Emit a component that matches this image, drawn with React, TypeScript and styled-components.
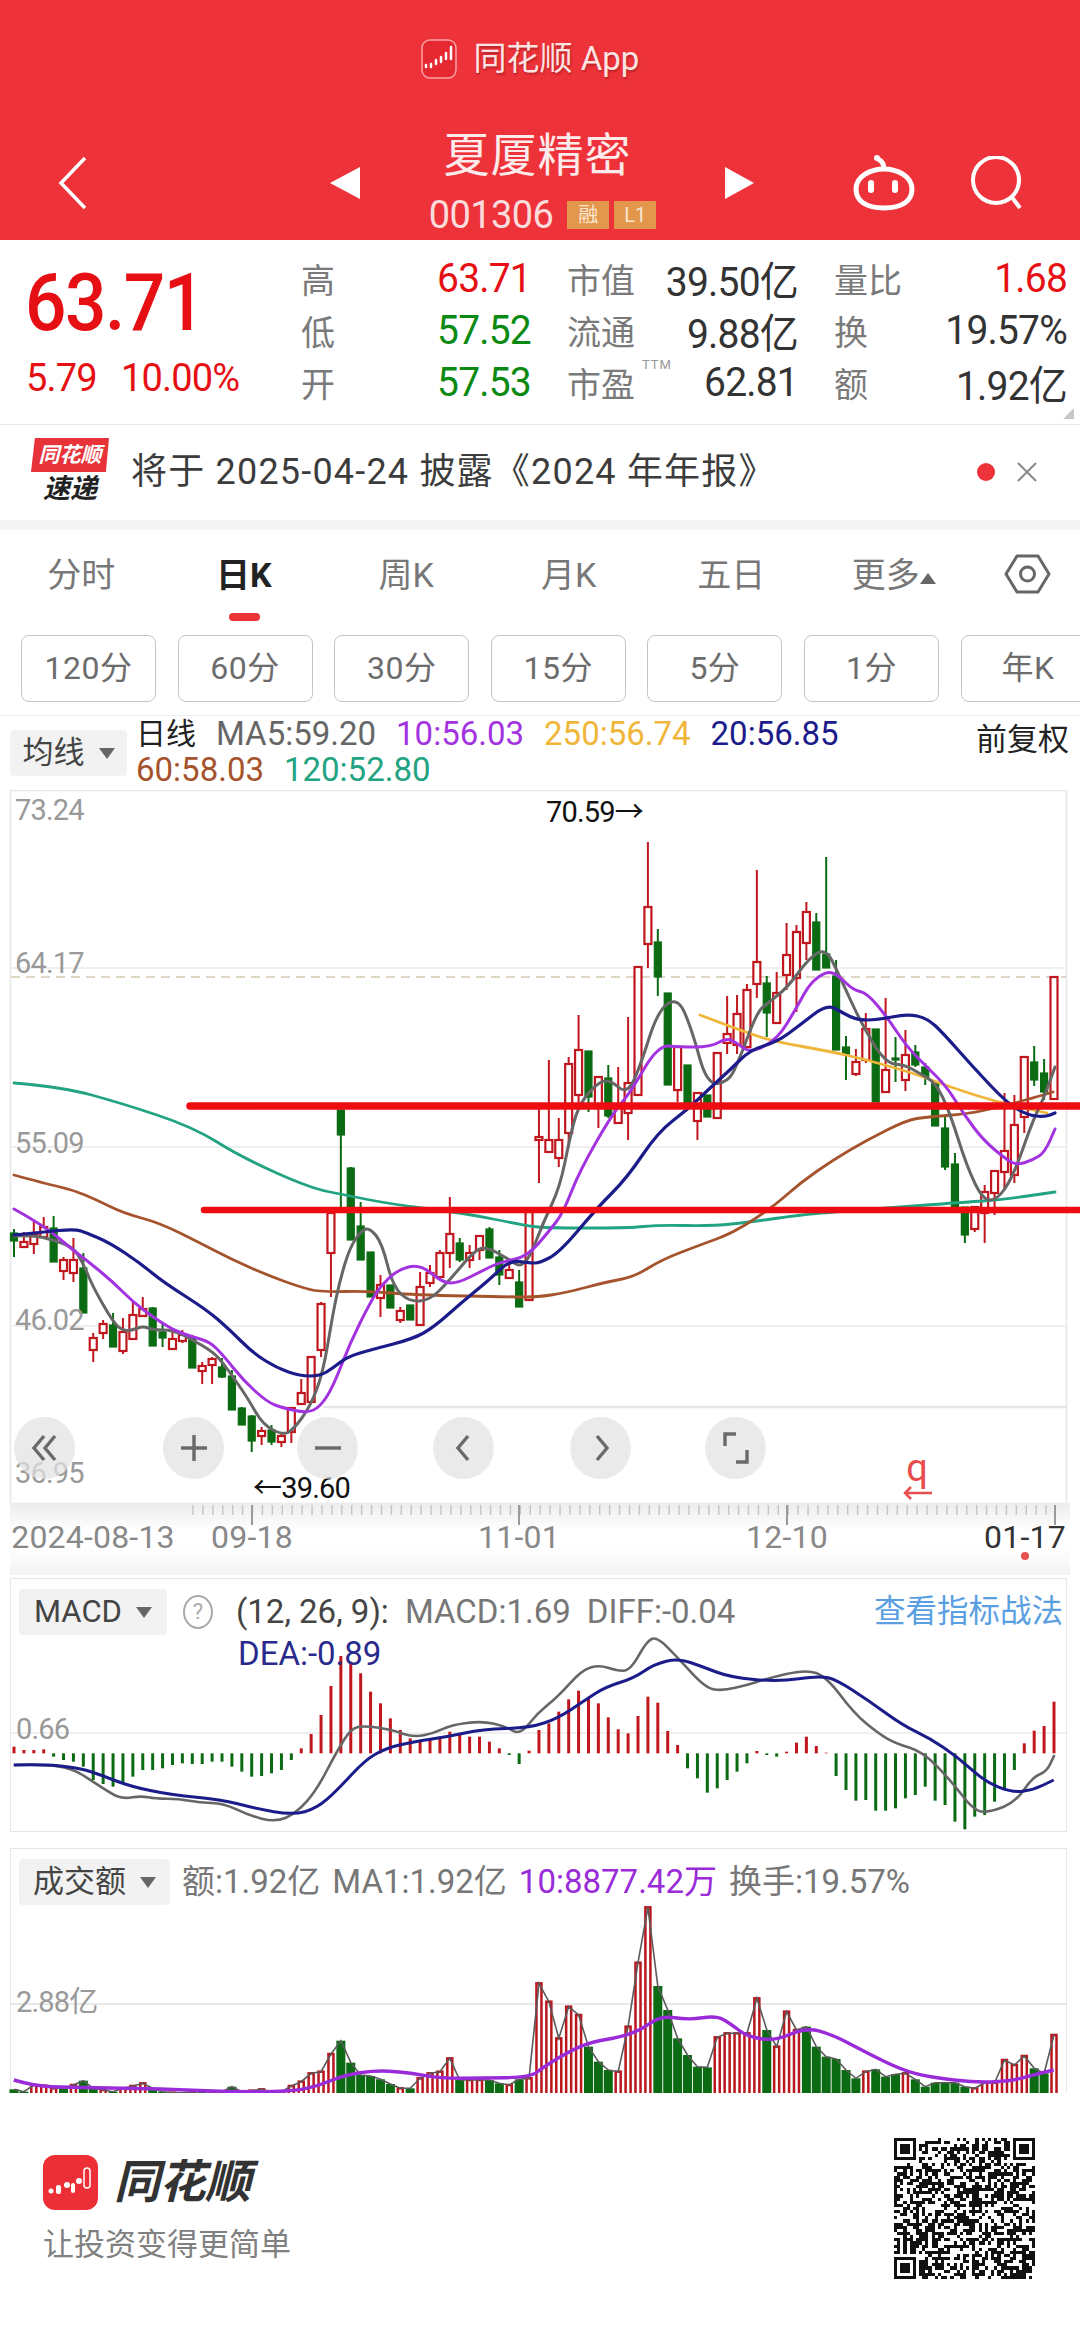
import styled, { createGlobalStyle } from "styled-components";

const SANS = `Roboto, "Noto Sans CJK SC", sans-serif`;

const GlobalStyle = createGlobalStyle`
  html, body {
    margin: 0;
    padding: 0;
    background: #fff;
    font-family: ${SANS};
  }
  * { box-sizing: border-box; }
`;

const RED = "#e60f14";
const GREEN = "#0a8a12";
const UP = "#c0161d";
const DOWN = "#0b6b12";

// [high, low, bodyTop, bodyBottom, up], read off the screenshot in page pixels
const CANDLES: number[][] = [
  [1229, 1257, 1233, 1241, 0], [1232, 1247, 1242, 1247, 1], [1221, 1254, 1235, 1244, 1], [1217, 1237, 1227, 1237, 1],
  [1216, 1262, 1228, 1262, 0], [1257, 1280, 1260, 1271, 1], [1238, 1282, 1260, 1273, 1], [1253, 1313, 1268, 1313, 0],
  [1333, 1362, 1338, 1350, 1], [1320, 1339, 1324, 1333, 1], [1313, 1347, 1325, 1347, 0], [1318, 1354, 1332, 1351, 1],
  [1302, 1340, 1315, 1339, 1], [1297, 1317, 1309, 1316, 1], [1307, 1346, 1308, 1346, 0], [1323, 1347, 1332, 1338, 0],
  [1332, 1350, 1339, 1349, 1], [1330, 1343, 1335, 1341, 1], [1335, 1368, 1337, 1368, 0], [1362, 1384, 1366, 1371, 1],
  [1357, 1384, 1359, 1365, 1], [1358, 1378, 1367, 1377, 0], [1370, 1410, 1376, 1410, 0], [1407, 1425, 1408, 1425, 0],
  [1415, 1452, 1416, 1441, 0], [1427, 1445, 1431, 1436, 1], [1425, 1445, 1430, 1442, 0], [1432, 1447, 1436, 1442, 1],
  [1407, 1443, 1408, 1432, 1], [1379, 1404, 1393, 1404, 1], [1356, 1402, 1357, 1402, 1], [1302, 1357, 1304, 1350, 1],
  [1213, 1297, 1213, 1253, 1], [1110, 1210, 1110, 1135, 0], [1167, 1240, 1168, 1240, 0], [1202, 1260, 1226, 1260, 0],
  [1252, 1297, 1252, 1297, 0], [1275, 1317, 1285, 1298, 1], [1285, 1308, 1285, 1308, 0], [1307, 1323, 1311, 1320, 1],
  [1305, 1320, 1305, 1320, 0], [1272, 1325, 1287, 1325, 1], [1265, 1287, 1273, 1283, 1], [1250, 1278, 1253, 1277, 1],
  [1197, 1268, 1234, 1253, 1], [1238, 1262, 1243, 1260, 0], [1245, 1268, 1253, 1260, 1], [1236, 1260, 1236, 1250, 1],
  [1227, 1258, 1229, 1258, 0], [1250, 1285, 1257, 1275, 0], [1260, 1279, 1270, 1278, 1], [1270, 1307, 1282, 1307, 0],
  [1208, 1300, 1212, 1300, 1], [1108, 1183, 1137, 1140, 1], [1060, 1152, 1140, 1152, 1], [1118, 1167, 1140, 1158, 1],
  [1057, 1147, 1064, 1133, 1], [1015, 1107, 1050, 1095, 1], [1051, 1112, 1051, 1097, 0], [1077, 1128, 1077, 1108, 1],
  [1065, 1118, 1078, 1116, 0], [1067, 1123, 1108, 1123, 1], [1017, 1140, 1083, 1113, 1], [967, 1095, 967, 1095, 1],
  [842, 968, 907, 944, 1], [929, 996, 942, 977, 0], [993, 1085, 993, 1085, 0], [1047, 1102, 1047, 1090, 1],
  [1065, 1107, 1065, 1107, 0], [1093, 1140, 1093, 1121, 1], [1095, 1117, 1095, 1117, 0], [1053, 1118, 1053, 1118, 1],
  [996, 1054, 1034, 1043, 1], [995, 1054, 1014, 1045, 1], [984, 1047, 990, 1047, 1], [870, 998, 962, 984, 1],
  [976, 1037, 983, 1013, 0], [972, 1023, 993, 1023, 1], [923, 990, 955, 975, 1], [925, 1012, 932, 978, 1],
  [902, 960, 912, 943, 1], [913, 970, 922, 970, 0], [857, 968, 954, 968, 0], [960, 1050, 976, 1050, 0],
  [1036, 1080, 1047, 1054, 0], [1049, 1076, 1062, 1074, 1], [1013, 1063, 1029, 1060, 1], [1029, 1102, 1029, 1102, 0],
  [998, 1092, 1070, 1092, 1], [1037, 1082, 1058, 1060, 0], [1030, 1091, 1055, 1080, 1], [1045, 1067, 1052, 1065, 0],
  [1063, 1085, 1067, 1077, 0], [1083, 1126, 1083, 1126, 0], [1117, 1170, 1128, 1167, 0], [1153, 1207, 1164, 1207, 0],
  [1207, 1243, 1207, 1235, 0], [1207, 1232, 1207, 1229, 1], [1185, 1243, 1192, 1213, 1], [1170, 1215, 1171, 1193, 1],
  [1093, 1190, 1151, 1172, 1], [1095, 1183, 1125, 1175, 1], [1057, 1133, 1057, 1117, 1], [1046, 1086, 1062, 1080, 0],
  [1059, 1100, 1073, 1092, 0], [977, 1099, 977, 1099, 1],
];

const MA5 = [14,1236, 33,1235, 53,1240, 73,1247, 83,1263, 93,1287, 113,1322, 123,1331, 133,1330, 143,1326, 153,1330, 173,1330, 193,1340, 213,1352, 223,1363, 233,1377, 247,1397, 263,1425, 283,1435, 293,1430, 310,1407, 323,1373, 333,1313, 340,1280, 350,1247, 362,1230, 370,1228, 382,1243, 393,1287, 410,1302, 430,1300, 448,1282, 475,1250, 487,1247, 510,1260, 520,1267, 530,1257, 543,1223, 560,1187, 570,1137, 578,1107, 593,1087, 608,1078, 627,1095, 640,1067, 658,1010, 678,997, 692,1030, 707,1085, 728,1082, 738,1063, 757,1012, 768,1003, 788,987, 809,958, 826,948, 840,977, 861,1023, 885,1063, 905,1065, 919,1073, 936,1083, 950,1113, 967,1167, 983,1200, 997,1200, 1013,1177, 1033,1120, 1043,1100, 1055,1067];
const MA10 = [14,1209, 43,1225, 73,1250, 90,1263, 113,1282, 133,1302, 153,1317, 173,1330, 193,1337, 210,1342, 223,1355, 243,1380, 267,1402, 283,1408, 307,1413, 320,1407, 333,1387, 350,1343, 370,1303, 380,1287, 397,1270, 420,1264, 443,1283, 458,1283, 480,1272, 500,1262, 527,1257, 550,1230, 563,1213, 580,1170, 613,1113, 630,1093, 658,1045, 680,1047, 710,1047, 727,1038, 737,1043, 750,1053, 777,1040, 797,1007, 810,983, 827,971, 838,975, 853,990, 867,993, 887,1017, 907,1047, 927,1067, 947,1087, 963,1113, 983,1140, 1007,1160, 1017,1165, 1033,1160, 1045,1152, 1055,1129];
const MA20 = [14,1235, 43,1232, 75,1229, 87,1233, 110,1243, 140,1263, 163,1282, 207,1310, 230,1330, 253,1353, 277,1368, 300,1376, 320,1376, 333,1368, 347,1357, 370,1350, 413,1339, 434,1327, 461,1303, 489,1280, 510,1260, 530,1263, 540,1263, 560,1252, 597,1208, 627,1178, 658,1132, 687,1110, 710,1088, 730,1070, 750,1050, 777,1042, 800,1025, 827,1004, 843,1013, 857,1020, 877,1020, 907,1014, 927,1018, 943,1033, 973,1067, 1007,1103, 1027,1115, 1045,1117, 1055,1113];
const MA60 = [14,1175, 43,1183, 73,1190, 97,1200, 123,1213, 160,1223, 200,1243, 233,1260, 267,1275, 300,1287, 320,1292, 370,1291, 413,1295, 517,1297, 537,1297, 565,1293, 606,1282, 634,1277, 661,1260, 700,1245, 733,1233, 773,1207, 800,1183, 833,1160, 867,1140, 907,1120, 927,1117, 967,1114, 1000,1107, 1033,1098, 1053,1092];
const MA120 = [14,1083, 62,1087, 121,1103, 193,1127, 241,1157, 310,1188, 345,1195, 390,1204, 463,1213, 523,1225, 543,1228, 630,1228, 657,1225, 713,1226, 750,1222, 800,1215, 833,1212, 900,1207, 967,1202, 1000,1200, 1055,1192];
const MA250 = [700,1015, 747,1033, 777,1042, 833,1052, 867,1060, 913,1073, 950,1087, 1000,1103, 1047,1113];

// bar ends as read from the panel crops (x = z / 1.452, y = z / 3 + panel origin)
const MACD_BARS = [560,570,570,568,590,600,605,620,660,672,680,672,650,630,630,625,615,610,612,612,605,605,620,635,650,648,640,630,600,565,522,465,378,288,305,340,395,430,475,510,535,545,535,530,515,525,530,530,545,565,585,612,572,510,490,455,418,392,412,430,472,508,520,468,410,428,513,555,625,655,698,685,660,635,610,573,585,590,575,548,530,558,578,648,690,722,720,752,752,745,715,705,680,722,735,785,808,770,765,725,690,630,550,512,498,425];
const DIFF = [20,615, 60,612, 105,625, 135,665, 165,705, 180,716, 205,708, 225,716, 260,717, 290,728, 325,730, 360,765, 400,787, 430,760, 460,690, 490,570, 510,505, 530,497, 570,510, 600,532, 630,520, 655,495, 700,483, 735,500, 755,525, 780,460, 810,410, 845,330, 870,315, 895,332, 915,332, 940,240, 955,232, 985,295, 1025,385, 1050,392, 1085,375, 1110,358, 1170,328, 1200,350, 1240,460, 1275,520, 1300,550, 1340,575, 1380,660, 1415,755, 1440,755, 1475,725, 1500,650, 1520,635, 1531,585];
const DEA = [20,615, 60,612, 110,622, 140,640, 190,680, 250,705, 320,718, 370,745, 425,765, 460,745, 490,690, 530,600, 560,565, 600,545, 650,530, 700,508, 770,503, 810,475, 850,420, 880,380, 920,355, 950,312, 985,295, 1020,320, 1060,352, 1130,365, 1190,347, 1215,360, 1260,420, 1310,495, 1350,535, 1390,590, 1430,665, 1470,698, 1500,690, 1530,660];

// [top, up]
const VOLUME: number[][] = [[748,0],[755,0],[735,1],[737,1],[745,1],[745,0],[735,1],[722,0],[745,0],[750,1],[755,0],[745,1],[738,1],[730,1],[745,0],[755,0],[758,1],[758,0],[756,1],[755,0],[755,1],[755,1],[740,0],[755,0],[752,1],[748,1],[755,0],[755,1],[738,1],[725,1],[700,1],[695,1],[642,1],[602,0],[668,0],[705,0],[708,0],[718,0],[732,0],[745,1],[745,0],[715,1],[700,1],[695,1],[655,1],[720,0],[720,1],[720,1],[720,0],[730,0],[735,1],[718,0],[715,1],[430,1],[485,1],[595,1],[500,1],[525,1],[620,0],[665,0],[690,0],[695,1],[560,1],[368,1],[202,1],[438,0],[510,0],[595,0],[645,0],[680,0],[682,0],[592,1],[580,1],[580,1],[580,1],[475,1],[570,0],[620,1],[515,1],[570,1],[560,0],[620,0],[650,0],[657,0],[690,0],[715,0],[695,1],[688,0],[710,0],[703,0],[700,1],[718,0],[740,0],[728,0],[728,0],[728,0],[740,0],[745,1],[728,1],[728,1],[660,1],[675,1],[648,1],[685,0],[700,0],[585,1]];
const VOL_MA = [20,720, 50,738, 100,742, 180,745, 250,748, 330,755, 420,755, 460,740, 500,705, 550,690, 600,700, 640,715, 700,714, 770,712, 790,680, 830,630, 860,605, 900,592, 930,570, 960,527, 1000,540, 1040,527, 1060,550, 1085,590, 1125,603, 1170,562, 1210,585, 1260,640, 1310,690, 1350,712, 1420,728, 1470,722, 1500,705, 1530,690];

const barX = (i: number, n: number) => 14 + (1040 * i) / (n - 1);

// smooth curve through the points, quadratic via midpoints
function curve(flat: number[], fx = (v: number) => v, fy = (v: number) => v) {
  let d = `M${fx(flat[0]).toFixed(1)} ${fy(flat[1]).toFixed(1)}`;
  for (let i = 2; i < flat.length - 2; i += 2) {
    const x = fx(flat[i]);
    const y = fy(flat[i + 1]);
    const mx = (x + fx(flat[i + 2])) / 2;
    const my = (y + fy(flat[i + 3])) / 2;
    d += `Q${x.toFixed(1)} ${y.toFixed(1)} ${mx.toFixed(1)} ${my.toFixed(1)}`;
  }
  const n = flat.length;
  return d + `L${fx(flat[n - 2]).toFixed(1)} ${fy(flat[n - 1]).toFixed(1)}`;
}

function qrPath() {
  const size = 45;
  let seed = 20250117;
  const rnd = () => {
    seed = (seed * 1664525 + 1013904223) >>> 0;
    return seed / 4294967296;
  };
  const finder = (x: number, y: number, ox: number, oy: number) => {
    const dx = x - ox;
    const dy = y - oy;
    if (dx < -1 || dy < -1 || dx > 7 || dy > 7) return null;
    if (dx < 0 || dy < 0 || dx > 6 || dy > 6) return false;
    if (dx === 0 || dy === 0 || dx === 6 || dy === 6) return true;
    if (dx === 1 || dy === 1 || dx === 5 || dy === 5) return false;
    return true;
  };
  let d = "";
  for (let y = 0; y < size; y++) {
    for (let x = 0; x < size; x++) {
      const f = finder(x, y, 0, 0) ?? finder(x, y, size - 7, 0) ?? finder(x, y, 0, size - 7);
      const on = f === null ? rnd() > 0.48 : f;
      if (on) d += `M${x} ${y}h1v1h-1z`;
    }
  }
  return d;
}
const QR_D = qrPath();

const Page = styled.div`
  width: 1080px;
  height: 2339px;
  overflow: hidden;
  background: #fff;
  color: #333;
`;

const Header = styled.header`
  height: 240px;
  background: #ee323a;
  color: #fff;
  padding-top: 39px;
`;

const AppBar = styled.div`
  display: flex;
  justify-content: center;
  align-items: center;
  gap: 17px;
  height: 40px;
  font-size: 33px;
  line-height: 40px;
  color: #fbe3e3;
  text-shadow: 1px 2px 2px rgba(120, 20, 20, 0.45);
  padding-right: 20px;
`;

const StockRow = styled.div`
  display: flex;
  align-items: center;
  height: 112px;
  margin-top: 37px;
  padding-left: 58px;
`;

const Back = styled.svg`
  width: 30px;
  height: 54px;
  margin-top: 22px;
`;

const StepArrow = styled.span<{ $dir: "left" | "right" }>`
  width: 0;
  height: 0;
  margin-top: 22px;
  margin-left: ${(p) => (p.$dir === "left" ? "242px" : "0")};
  border-top: 16px solid transparent;
  border-bottom: 16px solid transparent;
  ${(p) => (p.$dir === "left" ? "border-right: 30px solid #fff;" : "border-left: 29px solid #fff;")}
`;

const TitleBlock = styled.div`
  width: 365px;
  display: flex;
  flex-direction: column;
  align-items: center;
  margin-top: 13px;
  padding-right: 10px;
`;

const StockName = styled.div`
  font-size: 46px;
  line-height: 54px;
  letter-spacing: 1px;
  color: #fdeaea;
`;

const CodeRow = styled.div`
  display: flex;
  align-items: center;
  gap: 5px;
  margin-top: 18px;
  padding-left: 10px;
`;

const StockCode = styled.span`
  font-size: 38px;
  line-height: 30px;
  letter-spacing: -0.6px;
  color: #fbdcdc;
  margin-right: 9px;
`;

const Badge = styled.span`
  width: 42px;
  height: 28px;
  background: #e2974c;
  color: #fbe6d2;
  font-size: 20px;
  line-height: 28px;
  text-align: center;
`;

const Robot = styled.svg`
  width: 62px;
  height: 56px;
  margin-left: 99px;
  margin-top: 22px;
`;

const Lens = styled.svg`
  width: 52px;
  height: 54px;
  margin-left: 55px;
  margin-top: 22px;
`;

const Quote = styled.section`
  position: relative;
  height: 185px;
  display: flex;
  border-bottom: 1px solid #e8e8e8;
  padding: 12px 16px 0 25px;
  &::after {
    content: "";
    position: absolute;
    right: 6px;
    bottom: 5px;
    border-left: 11px solid transparent;
    border-bottom: 11px solid #c8c8c8;
  }
`;

const PriceBlock = styled.div`
  width: 276px;
  color: ${RED};
`;

const Price = styled.div`
  font-size: 73px;
  line-height: 62px;
  letter-spacing: -1.5px;
  font-weight: 500;
  margin-top: 19px;
  transform: scaleY(1.1);
`;

const Change = styled.div`
  display: flex;
  gap: 24px;
  margin-top: 26px;
  font-size: 38px;
  line-height: 38px;
  letter-spacing: -0.8px;
  margin-left: 1px;
`;

const Stats = styled.div`
  display: grid;
  grid-template-columns: 226px 227px 229px;
  grid-auto-rows: 52px;
  column-gap: 40px;
`;

const Stat = styled.div`
  position: relative;
  display: flex;
  justify-content: space-between;
  align-items: center;
`;

const StatLabel = styled.span`
  font-size: 34px;
  color: #7a7a7a;
`;

const StatValue = styled.span<{ $color?: string }>`
  display: inline-block;
  margin-right: -4px;
  font-size: 39px;
  letter-spacing: -0.8px;
  transform: scaleY(1.06);
  color: ${(p) => p.$color ?? "#333"};
`;

const Ttm = styled.sup`
  position: absolute;
  left: 75px;
  top: 2px;
  font-size: 13px;
  line-height: 14px;
  letter-spacing: 1px;
  color: #999;
`;

const Notice = styled.section`
  height: 105px;
  display: flex;
  align-items: flex-start;
  border-bottom: 10px solid #f5f5f5;
  padding: 13px 42px 0 31px;
`;

const NoticeLogo = styled.div`
  width: 78px;
  display: flex;
  flex-direction: column;
  align-items: center;
  font-style: italic;
  font-weight: 700;
`;

const LogoFlag = styled.div`
  position: relative;
  width: 78px;
  height: 34px;
  background: #e8323a;
  color: #fff;
  font-size: 21px;
  line-height: 34px;
  text-align: center;
  white-space: nowrap;
  clip-path: polygon(5% 0, 100% 0, 96% 100%, 54% 100%, 50% 110%, 46% 100%, 0 100%);
`;

const LogoSub = styled.div`
  font-size: 27px;
  line-height: 30px;
  color: #222;
  margin-top: 2px;
`;

const NoticeText = styled.div`
  flex: 1;
  margin-left: 22px;
  margin-top: 11px;
  font-size: 36px;
  line-height: 46px;
  letter-spacing: 1.2px;
  color: #3c3c3c;
  white-space: nowrap;
`;

const NoticeDot = styled.span`
  width: 18px;
  height: 18px;
  margin-top: 25px;
  border-radius: 50%;
  background: #ee323a;
`;

const NoticeClose = styled.svg`
  width: 22px;
  height: 22px;
  margin-top: 23px;
  margin-left: 21px;
`;

const Tabs = styled.nav`
  display: grid;
  grid-template-columns: repeat(6, 162.5px) 1fr;
  height: 97px;
`;

const Tab = styled.div<{ $active?: boolean }>`
  position: relative;
  display: flex;
  justify-content: center;
  align-items: flex-start;
  font-size: 34px;
  line-height: 90px;
  color: ${(p) => (p.$active ? "#222" : "#777")};
  font-weight: ${(p) => (p.$active ? 700 : 400)};
  ${(p) =>
    p.$active &&
    `&::after {
      content: "";
      position: absolute;
      left: 50%;
      bottom: 6px;
      width: 31px;
      height: 8px;
      margin-left: -15px;
      border-radius: 4px;
      background: #ee323a;
    }`}
`;

const Caret = styled.span<{ $up?: boolean; $color?: string; $size?: number }>`
  width: 0;
  height: 0;
  align-self: center;
  border-left: ${(p) => p.$size ?? 8}px solid transparent;
  border-right: ${(p) => p.$size ?? 8}px solid transparent;
  ${(p) =>
    p.$up
      ? `border-bottom: 11px solid ${p.$color ?? "#666"};`
      : `border-top: 11px solid ${p.$color ?? "#666"};`}
`;

const SettingsIcon = styled.svg`
  width: 47px;
  height: 42px;
  margin-top: 23px;
`;

const Periods = styled.div`
  display: flex;
  gap: 21.6px;
  margin-top: 8px;
  padding-left: 21px;
  padding-bottom: 13px;
  overflow: hidden;
  border-bottom: 1px solid #eee;
`;

const PeriodChip = styled.div`
  flex: none;
  width: 135px;
  height: 67px;
  border: 1.5px solid #c4c4c4;
  border-radius: 8px;
  font-size: 32px;
  line-height: 64px;
  text-align: center;
  letter-spacing: 0.5px;
  color: #6c6c6c;
`;

const LegendBar = styled.div`
  display: flex;
  height: 74px;
  padding-left: 10px;
`;

const Chip = styled.div<{ $width: number }>`
  flex: none;
  width: ${(p) => p.$width}px;
  height: 46px;
  display: flex;
  align-items: center;
  justify-content: center;
  gap: 14px;
  background: #f2f2f2;
  border-radius: 4px;
  font-size: 31px;
  line-height: 46px;
  color: #444;
`;

const ChartChip = styled(Chip)`
  margin-top: 14px;
`;

const LegendLines = styled.div`
  width: 849px;
  padding-left: 9px;
  font-size: 33px;
  line-height: 36px;
`;

const LegendLine = styled.div`
  display: flex;
  gap: 20px;
`;

const LegendItem = styled.span<{ $color: string; $small?: boolean }>`
  color: ${(p) => p.$color};
  font-size: ${(p) => (p.$small ? "30px" : "inherit")};
  white-space: nowrap;
`;

const Adjust = styled.div`
  font-size: 31px;
  line-height: 48px;
  color: #222;
  white-space: nowrap;
`;

const ChartBody = styled.div`
  position: relative;
  height: 713px;
`;

const ChartSvg = styled.svg`
  position: absolute;
  left: 0;
  top: 0;
  display: block;
`;

const AxisLabel = styled.span<{ $y: number }>`
  position: absolute;
  left: 15px;
  top: ${(p) => p.$y}px;
  font-size: 29px;
  line-height: 34px;
  letter-spacing: -0.8px;
  color: #999;
`;

const PriceMark = styled.span<{ $left: number; $y: number }>`
  position: absolute;
  left: ${(p) => p.$left}px;
  top: ${(p) => p.$y}px;
  font-size: 29px;
  line-height: 34px;
  letter-spacing: -0.8px;
  color: #111;
  white-space: nowrap;
`;

const NavButton = styled.div<{ $left: number }>`
  position: absolute;
  left: ${(p) => p.$left}px;
  top: 627px;
  width: 61px;
  height: 62px;
  display: flex;
  align-items: center;
  justify-content: center;
  border-radius: 50%;
  background: rgba(226, 226, 226, 0.72);
`;

const NavIcon = styled.svg`
  width: 36px;
  height: 36px;
`;

const FlagMark = styled.div`
  position: absolute;
  left: 899px;
  top: 662px;
  width: 36px;
  display: flex;
  flex-direction: column;
  align-items: center;
  font-size: 38px;
  line-height: 32px;
  color: #e84c4c;
`;

const FlagArrow = styled.svg`
  width: 30px;
  height: 14px;
  margin-top: 2px;
`;

const DateBand = styled.div`
  position: relative;
  height: 72px;
  margin: 0 10px;
  background: linear-gradient(#ececec, #fff 38%, #fff 62%, #f3f3f3);
`;

const Ticks = styled.svg`
  position: absolute;
  left: -10px;
  top: 0;
`;

const DateLabel = styled.span<{ $x: number; $dark?: boolean }>`
  position: absolute;
  left: ${(p) => p.$x - 10}px;
  top: 16px;
  transform: translateX(-50%);
  font-size: 32px;
  line-height: 36px;
  letter-spacing: 0.2px;
  color: ${(p) => (p.$dark ? "#333" : "#888")};
  white-space: nowrap;
`;

const LatestDot = styled.span`
  position: absolute;
  left: 1011px;
  top: 49px;
  width: 8px;
  height: 8px;
  border-radius: 50%;
  background: #e8504f;
`;

const Panel = styled.section<{ $height: number; $mt: number; $open?: boolean }>`
  position: relative;
  height: ${(p) => p.$height}px;
  margin: ${(p) => p.$mt}px 13px 0 10px;
  border: 1px solid #e6e6e6;
  ${(p) => (p.$open ? "border-bottom: none;" : "")}
  padding: 10px 0 0 8px;
`;

const PanelSvg = styled.svg`
  position: absolute;
  left: -11px;
  top: -1px;
  display: block;
`;

const PanelHead = styled.div<{ $gap: number }>`
  position: relative;
  display: flex;
  align-items: center;
  gap: ${(p) => p.$gap}px;
  font-size: 33px;
  line-height: 46px;
  white-space: nowrap;
`;

const HelpMark = styled.span`
  flex: none;
  width: 30px;
  height: 34px;
  margin-right: 7px;
  border: 2px solid #aaa;
  border-radius: 50%;
  font-size: 22px;
  line-height: 30px;
  text-align: center;
  color: #aaa;
`;

const HeadText = styled.span<{ $color?: string }>`
  color: ${(p) => p.$color ?? "#777"};
`;

const TacticLink = styled.span`
  position: absolute;
  right: 3px;
  top: 0;
  font-size: 31.5px;
  color: #5b9fe3;
`;

const DeaLine = styled.div`
  position: relative;
  margin: -1px 0 0 219px;
  font-size: 33px;
  line-height: 40px;
  color: #2a2a8c;
`;

const PanelAxis = styled.span<{ $y: number }>`
  position: absolute;
  left: 5px;
  top: ${(p) => p.$y}px;
  font-size: 29px;
  line-height: 34px;
  letter-spacing: -0.8px;
  color: #999;
`;

const Footer = styled.footer`
  position: relative;
  height: 246px;
  background: #fff;
  display: flex;
  justify-content: space-between;
  padding: 45px 45px 0 43px;
`;

const Brand = styled.div`
  margin-top: 16px;
`;

const BrandRow = styled.div`
  display: flex;
  align-items: center;
  gap: 16px;
`;

const BrandName = styled.span`
  font-size: 46px;
  line-height: 56px;
  font-weight: 700;
  font-style: italic;
  letter-spacing: -0.5px;
  color: #333;
`;

const Slogan = styled.div`
  margin-top: 15px;
  font-size: 31px;
  line-height: 40px;
  color: #808080;
`;

const QrCode = styled.svg`
  width: 141px;
  height: 141px;
  shape-rendering: crispEdges;
`;

const periods = ["120分", "60分", "30分", "15分", "5分", "1分", "年K"];
const tabs = ["分时", "日K", "周K", "月K", "五日"];

const navIcons = [
  { left: 14, d: "M17 6L7 18l10 12M28 6L18 18l10 12" },
  { left: 163, d: "M5 18h26M18 5v26" },
  { left: 297, d: "M5 18h26" },
  { left: 433, d: "M22 6L12 18l10 12" },
  { left: 570, d: "M14 6l10 12-10 12" },
  { left: 705, d: "M18 4H7v12M18 32h11V20" },
];

function CandleChart() {
  const n = CANDLES.length;
  return (
    <ChartSvg width="1080" height="713" viewBox="0 790 1080 713">
      <rect x="10.5" y="790.5" width="1056" height="713" fill="none" stroke="#e6e6e6" strokeWidth="1.5" />
      <path d="M11 968H1066M11 1147H1066M11 1326H1066" stroke="#efefef" strokeWidth="2" />
      <path d="M323 1407H1066" stroke="#e6e6e6" strokeWidth="2.5" />
      <path d="M11 977H1066" stroke="#e0d6c6" strokeWidth="2" strokeDasharray="9 6" />
      {CANDLES.map(([hi, lo, top, bot, up], i) => {
        const x = barX(i, n);
        const color = up ? UP : DOWN;
        return (
          <g key={i}>
            <path d={`M${x} ${hi}V${lo}`} stroke={color} strokeWidth="2" />
            <rect
              x={x - 3.5}
              y={top}
              width="7"
              height={Math.max(bot - top, 1.5)}
              fill={up ? "#fff" : color}
              stroke={color}
              strokeWidth={up ? 2.2 : 1.2}
            />
          </g>
        );
      })}
      <g fill="none" strokeLinejoin="round" strokeLinecap="round">
        <path d={curve(MA120)} stroke="#22a381" strokeWidth="2.8" />
        <path d={curve(MA60)} stroke="#a5532c" strokeWidth="2.8" />
        <path d={curve(MA250)} stroke="#f0b63a" strokeWidth="2.8" />
        <path d={curve(MA5)} stroke="#666" strokeWidth="3" />
        <path d={curve(MA10)} stroke="#a333e0" strokeWidth="3" />
        <path d={curve(MA20)} stroke="#1b1b8a" strokeWidth="3.2" />
      </g>
      <path d="M190 1106H1080" stroke="#ee0c12" strokeWidth="7.5" strokeLinecap="round" />
      <path d="M204 1210H1080" stroke="#ee0c12" strokeWidth="6.5" strokeLinecap="round" />
    </ChartSvg>
  );
}

function MacdChart() {
  const fx = (v: number) => v / 1.452;
  const fy = (v: number) => v / 3 + 1560;
  const base = fy(580);
  const n = MACD_BARS.length;
  return (
    <PanelSvg width="1080" height="254" viewBox="0 1578 1080 254">
      <path d="M11 1733H1066" stroke="#efefef" strokeWidth="2" />
      {MACD_BARS.map((v, i) => {
        const y = fy(v);
        const x = barX(i, n);
        return <path key={i} d={`M${x} ${base}V${y}`} stroke={y < base ? UP : DOWN} strokeWidth="3" />;
      })}
      <g fill="none" strokeLinejoin="round">
        <path d={curve(DIFF, fx, fy)} stroke="#666" strokeWidth="2.6" />
        <path d={curve(DEA, fx, fy)} stroke="#1b1b8a" strokeWidth="3" />
      </g>
    </PanelSvg>
  );
}

function VolumeChart() {
  const fx = (v: number) => v / 1.452;
  const fy = (v: number) => v / 3 + 1840;
  const base = 2093;
  const n = VOLUME.length;
  const tops = VOLUME.map(([t], i) => `${barX(i, n).toFixed(1)},${fy(t).toFixed(1)}`).join(" ");
  return (
    <PanelSvg width="1080" height="245" viewBox="0 1848 1080 245">
      <path d="M11 2004H1066" stroke="#e8e8e8" strokeWidth="2" />
      {VOLUME.map(([t, up], i) => {
        const x = barX(i, n);
        const y = fy(t);
        return up ? (
          <rect key={i} x={x - 2.5} y={y} width="5" height={base - y + 2} fill="#fff" stroke="#b9161d" strokeWidth="2.5" />
        ) : (
          <rect key={i} x={x - 4.5} y={y} width="9" height={base - y} fill={DOWN} />
        );
      })}
      <polyline points={tops} fill="none" stroke="#5a5a5a" strokeWidth="1.6" />
      <path d={curve(VOL_MA, fx, fy)} fill="none" stroke="#9a2bd8" strokeWidth="3.4" />
    </PanelSvg>
  );
}

export default function App() {
  const tickList: number[] = [];
  for (let x = 193; x <= 1055; x += 9.92) tickList.push(x);
  return (
    <Page>
      <GlobalStyle />
      <Header>
        <AppBar>
          <svg width="36" height="40" viewBox="0 0 36 40">
            <rect x="1" y="1" width="34" height="38" rx="8" fill="#e62830" stroke="#f7a3a6" strokeWidth="1.5" />
            <path d="M5 26v2M10 25v3M15 21v4M20 18v5M25 14v6M30 8v12" stroke="#fff" strokeWidth="2.5" strokeLinecap="round" />
          </svg>
          <span>同花顺 App</span>
        </AppBar>
        <StockRow>
          <Back viewBox="0 0 30 54">
            <path d="M27 2L3 27l24 25" fill="none" stroke="#fff" strokeWidth="3.5" />
          </Back>
          <StepArrow $dir="left" />
          <TitleBlock>
            <StockName>夏厦精密</StockName>
            <CodeRow>
              <StockCode>001306</StockCode>
              <Badge>融</Badge>
              <Badge>L1</Badge>
            </CodeRow>
          </TitleBlock>
          <StepArrow $dir="right" />
          <Robot viewBox="0 0 62 56">
            <path
              d="M31 14c13 0 28 7 28 20 0 12-10 19-28 19S3 46 3 34c0-13 15-20 28-20zM31 14c0-5-2-8-6-10"
              fill="none"
              stroke="#fff"
              strokeWidth="5"
            />
            <circle cx="24" cy="3" r="3" fill="#fff" />
            <rect x="15" y="25" width="6" height="13" rx="3" fill="#fff" />
            <rect x="39" y="25" width="6" height="13" rx="3" fill="#fff" />
          </Robot>
          <Lens viewBox="0 0 52 54">
            <circle cx="26" cy="24" r="23" fill="none" stroke="#fff" strokeWidth="4" />
            <path d="M41 40l9 12" stroke="#fff" strokeWidth="4" />
          </Lens>
        </StockRow>
      </Header>

      <Quote>
        <PriceBlock>
          <Price>63.71</Price>
          <Change>
            <span>5.79</span>
            <span>10.00%</span>
          </Change>
        </PriceBlock>
        <Stats>
          <Stat>
            <StatLabel>高</StatLabel>
            <StatValue $color={RED}>63.71</StatValue>
          </Stat>
          <Stat>
            <StatLabel>市值</StatLabel>
            <StatValue>39.50亿</StatValue>
          </Stat>
          <Stat>
            <StatLabel>量比</StatLabel>
            <StatValue $color={RED}>1.68</StatValue>
          </Stat>
          <Stat>
            <StatLabel>低</StatLabel>
            <StatValue $color={GREEN}>57.52</StatValue>
          </Stat>
          <Stat>
            <StatLabel>流通</StatLabel>
            <StatValue>9.88亿</StatValue>
          </Stat>
          <Stat>
            <StatLabel>换</StatLabel>
            <StatValue>19.57%</StatValue>
          </Stat>
          <Stat>
            <StatLabel>开</StatLabel>
            <StatValue $color={GREEN}>57.53</StatValue>
          </Stat>
          <Stat>
            <StatLabel>市盈</StatLabel>
            <Ttm>TTM</Ttm>
            <StatValue>62.81</StatValue>
          </Stat>
          <Stat>
            <StatLabel>额</StatLabel>
            <StatValue>1.92亿</StatValue>
          </Stat>
        </Stats>
      </Quote>

      <Notice>
        <NoticeLogo>
          <LogoFlag>同花顺</LogoFlag>
          <LogoSub>速递</LogoSub>
        </NoticeLogo>
        <NoticeText>将于 2025-04-24 披露《2024 年年报》</NoticeText>
        <NoticeDot />
        <NoticeClose viewBox="0 0 22 22">
          <path d="M2 2l18 18M20 2L2 20" stroke="#888" strokeWidth="2" />
        </NoticeClose>
      </Notice>

      <Tabs>
        {tabs.map((t) => (
          <Tab key={t} $active={t === "日K"}>
            {t}
          </Tab>
        ))}
        <Tab>
          更多
          <Caret $up $size={8} />
        </Tab>
        <Tab>
          <SettingsIcon viewBox="0 0 47 42">
            <path d="M13 3h21l11 18-11 18H13L2 21z" fill="none" stroke="#666" strokeWidth="3" strokeLinejoin="round" />
            <circle cx="23.5" cy="21" r="7" fill="none" stroke="#666" strokeWidth="3" />
          </SettingsIcon>
        </Tab>
      </Tabs>

      <Periods>
        {periods.map((p) => (
          <PeriodChip key={p}>{p}</PeriodChip>
        ))}
      </Periods>

      <LegendBar>
        <ChartChip $width={117}>
          均线
          <Caret $color="#666" />
        </ChartChip>
        <LegendLines>
          <LegendLine>
            <LegendItem $color="#222" $small>日线</LegendItem>
            <LegendItem $color="#666">MA5:59.20</LegendItem>
            <LegendItem $color="#a333e0">10:56.03</LegendItem>
            <LegendItem $color="#f0b63a">250:56.74</LegendItem>
            <LegendItem $color="#1b1b8a">20:56.85</LegendItem>
          </LegendLine>
          <LegendLine>
            <LegendItem $color="#a5532c">60:58.03</LegendItem>
            <LegendItem $color="#22a381">120:52.80</LegendItem>
          </LegendLine>
        </LegendLines>
        <Adjust>前复权</Adjust>
      </LegendBar>

      <ChartBody>
        <CandleChart />
        <AxisLabel $y={3}>73.24</AxisLabel>
        <AxisLabel $y={156}>64.17</AxisLabel>
        <AxisLabel $y={336}>55.09</AxisLabel>
        <AxisLabel $y={513}>46.02</AxisLabel>
        <AxisLabel $y={666}>36.95</AxisLabel>
        <PriceMark $left={546} $y={5}>
          70.59→
        </PriceMark>
        <PriceMark $left={253} $y={681}>
          ←39.60
        </PriceMark>
        {navIcons.map((b) => (
          <NavButton key={b.left} $left={b.left}>
            <NavIcon viewBox="0 0 36 36">
              <path d={b.d} fill="none" stroke="#6a6a6a" strokeWidth="3.4" />
            </NavIcon>
          </NavButton>
        ))}
        <FlagMark>
          <span>q</span>
          <FlagArrow viewBox="0 0 30 14">
            <path d="M30 7H3M9 1L3 7l6 6" fill="none" stroke="#e84c4c" strokeWidth="2.5" />
          </FlagArrow>
        </FlagMark>
      </ChartBody>

      <DateBand>
        <Ticks width="1080" height="24">
          {tickList.map((x, i) => (
            <path key={i} d={`M${x} 2v10`} stroke="#c6c6c6" strokeWidth="1.5" />
          ))}
          {[252, 519, 787, 1055].map((x) => (
            <path key={x} d={`M${x} 2v20`} stroke="#9a9a9a" strokeWidth="2" />
          ))}
        </Ticks>
        <DateLabel $x={93}>2024-08-13</DateLabel>
        <DateLabel $x={252}>09-18</DateLabel>
        <DateLabel $x={519}>11-01</DateLabel>
        <DateLabel $x={787}>12-10</DateLabel>
        <DateLabel $x={1025} $dark>
          01-17
        </DateLabel>
        <LatestDot />
      </DateBand>

      <Panel $height={254} $mt={3}>
        <MacdChart />
        <PanelHead $gap={16}>
          <Chip $width={148}>
            MACD
            <Caret $color="#666" />
          </Chip>
          <HelpMark>?</HelpMark>
          <HeadText $color="#444">(12, 26, 9):</HeadText>
          <HeadText>MACD:1.69</HeadText>
          <HeadText>DIFF:-0.04</HeadText>
          <TacticLink>查看指标战法</TacticLink>
        </PanelHead>
        <DeaLine>DEA:-0.89</DeaLine>
        <PanelAxis $y={133}>0.66</PanelAxis>
      </Panel>

      <Panel $height={245} $mt={16} $open>
        <VolumeChart />
        <PanelHead $gap={12}>
          <Chip $width={151}>
            成交额
            <Caret $color="#666" />
          </Chip>
          <HeadText>额:1.92亿</HeadText>
          <HeadText>MA1:1.92亿</HeadText>
          <HeadText $color="#9a2bd8">10:8877.42万</HeadText>
          <HeadText>换手:19.57%</HeadText>
        </PanelHead>
        <PanelAxis $y={136}>2.88亿</PanelAxis>
      </Panel>

      <Footer>
        <Brand>
          <BrandRow>
            <svg width="55" height="55" viewBox="0 0 55 55">
              <rect width="55" height="55" rx="12" fill="#ec2f37" />
              <g fill="#fff">
                <circle cx="8" cy="36" r="2.5" />
                <rect x="13" y="30" width="5" height="9" rx="2" />
                <circle cx="24" cy="30" r="3" />
                <rect x="28" y="28" width="4" height="10" rx="2" />
                <circle cx="36" cy="26" r="3" />
              </g>
              <rect x="41" y="13" width="6" height="20" rx="3" fill="none" stroke="#fff" strokeWidth="1.5" />
            </svg>
            <BrandName>同花顺</BrandName>
          </BrandRow>
          <Slogan>让投资变得更简单</Slogan>
        </Brand>
        <QrCode viewBox="0 0 45 45">
          <path d={QR_D} fill="#111" />
        </QrCode>
      </Footer>
    </Page>
  );
}
